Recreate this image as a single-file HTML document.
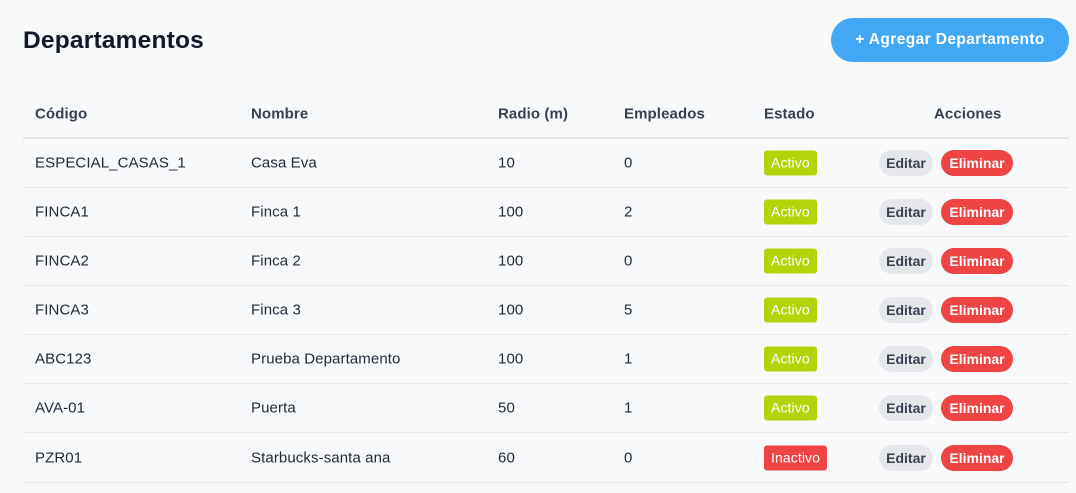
<!DOCTYPE html>
<html><head><meta charset="utf-8"><style>
*{margin:0;padding:0;box-sizing:border-box}
body{width:1076px;height:493px;background:#f8f9fb;font-family:"Liberation Sans",sans-serif;color:#1f2937;position:relative;overflow:hidden}
h1{position:absolute;left:23px;top:27px;font-size:24.5px;font-weight:700;color:#111827;letter-spacing:0.2px}
.add{position:absolute;left:831px;top:18px;width:238px;height:44px;border-radius:22px;background:#42a7f5;color:#fff;font-size:15.5px;font-weight:700;display:flex;align-items:center;justify-content:center;letter-spacing:0.4px}
.row{position:absolute;left:23px;width:1046px;height:49px;border-bottom:1px solid #e5e7eb;font-size:15px;letter-spacing:0.1px}
.row span{position:absolute;top:50%;transform:translateY(-50%)}
.hd{top:91px;height:48px;border-bottom:2px solid #e3e5e9;font-weight:700;color:#374151}
.c1{left:12px}.c2{left:228px}.c3{left:475px}.c4{left:601px}.c5{left:741px}
.badge{left:741px;height:25px;line-height:25px;padding:0 7px;border-radius:3px;background:#b3d30b;color:#fff;font-size:14px}
.badge.in{background:#ef4444}
.ed{left:856px;height:26px;line-height:26px;width:54px;text-align:center;border-radius:13px;background:#e5e7eb;color:#374151;font-weight:700;font-size:14px;letter-spacing:0}
.el{left:918px;height:26px;line-height:26px;width:72px;text-align:center;border-radius:13px;background:#ef4444;color:#fff;font-weight:700;font-size:14px;letter-spacing:0}
</style></head><body>
<h1>Departamentos</h1>
<div class="add">+ Agregar Departamento</div>
<div class="row hd"><span class="c1">Código</span><span class="c2">Nombre</span><span class="c3">Radio (m)</span><span class="c4">Empleados</span><span class="c5">Estado</span><span style="left:911px">Acciones</span></div>
<div class="row" style="top:139px"><span class="c1">ESPECIAL_CASAS_1</span><span class="c2">Casa Eva</span><span class="c3">10</span><span class="c4">0</span><span class="badge">Activo</span><span class="ed">Editar</span><span class="el">Eliminar</span></div>
<div class="row" style="top:188px"><span class="c1">FINCA1</span><span class="c2">Finca 1</span><span class="c3">100</span><span class="c4">2</span><span class="badge">Activo</span><span class="ed">Editar</span><span class="el">Eliminar</span></div>
<div class="row" style="top:237px"><span class="c1">FINCA2</span><span class="c2">Finca 2</span><span class="c3">100</span><span class="c4">0</span><span class="badge">Activo</span><span class="ed">Editar</span><span class="el">Eliminar</span></div>
<div class="row" style="top:286px"><span class="c1">FINCA3</span><span class="c2">Finca 3</span><span class="c3">100</span><span class="c4">5</span><span class="badge">Activo</span><span class="ed">Editar</span><span class="el">Eliminar</span></div>
<div class="row" style="top:335px"><span class="c1">ABC123</span><span class="c2">Prueba Departamento</span><span class="c3">100</span><span class="c4">1</span><span class="badge">Activo</span><span class="ed">Editar</span><span class="el">Eliminar</span></div>
<div class="row" style="top:384px"><span class="c1">AVA-01</span><span class="c2">Puerta</span><span class="c3">50</span><span class="c4">1</span><span class="badge">Activo</span><span class="ed">Editar</span><span class="el">Eliminar</span></div>
<div class="row" style="top:434px"><span class="c1">PZR01</span><span class="c2">Starbucks-santa ana</span><span class="c3">60</span><span class="c4">0</span><span class="badge in">Inactivo</span><span class="ed">Editar</span><span class="el">Eliminar</span></div>
</body></html>
